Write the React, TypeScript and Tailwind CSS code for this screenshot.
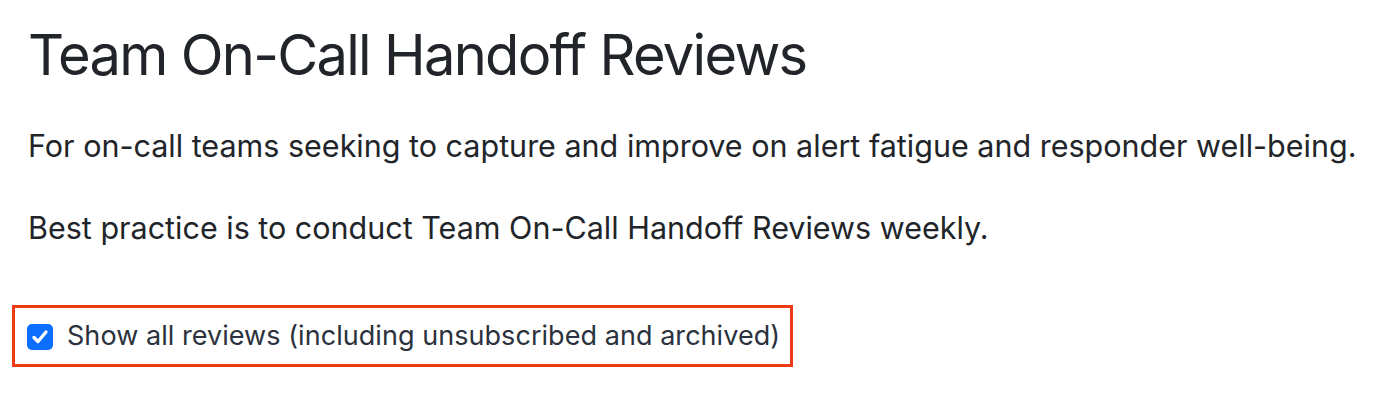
import React from "react";

export default function App() {
  return (
    <div className="w-[1378px] h-[406px] bg-white text-[#212529] font-['Inter',sans-serif] pl-[28px] pt-[22px]">
      <h1 className="text-[56px] leading-[67px] font-normal tracking-[-1.7px]">Team On-Call Handoff Reviews</h1>
      <p className="mt-[39px] text-[30.5px] leading-[36px]">For on-call teams seeking to capture and improve on alert fatigue and responder well-being.</p>
      <p className="mt-[46px] text-[30.5px] leading-[36px]">Best practice is to conduct Team On-Call Handoff Reviews weekly.</p>
      <div className="mt-[59px] ml-[-16px] w-[781px] h-[62px] border-[3px] border-[#ee3a17] flex items-center pl-[12px]">
        <div className="w-[26px] h-[26px] rounded-[5px] bg-[#0d6efd] flex items-center justify-center shrink-0 mt-[1px]">
          <svg width="20" height="20" viewBox="0 0 20 20" fill="none">
            <path d="M4 10.5l4 4 8-9.5" stroke="white" strokeWidth="3.4" strokeLinecap="round" strokeLinejoin="round" />
          </svg>
        </div>
        <span className="ml-[14px] text-[27px] leading-[32px] text-[#2b323d] tracking-[0.05px]">Show all reviews (including unsubscribed and archived)</span>
      </div>
    </div>
  );
}
